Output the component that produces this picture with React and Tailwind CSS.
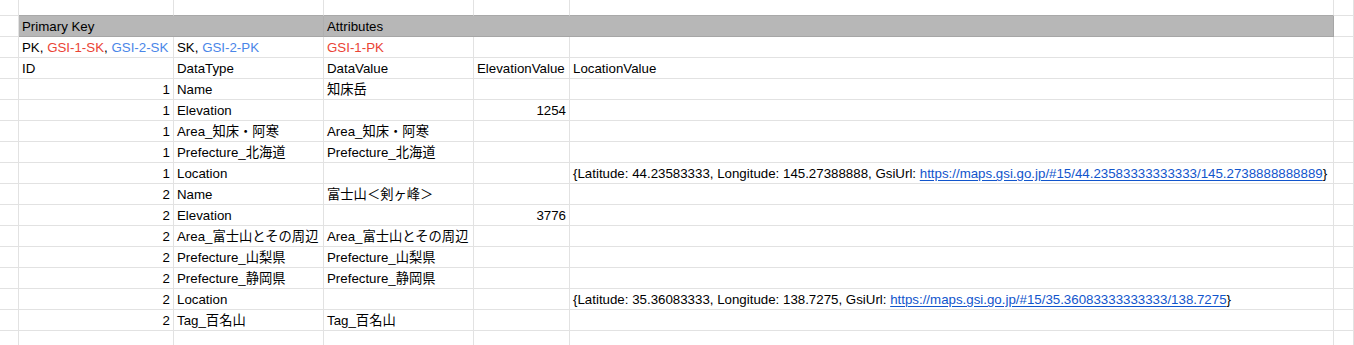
import React from "react";

const COLS = ["w-[19px]", "w-[155px]", "w-[150px]", "w-[150px]", "w-[96px]", "w-[764px]", "flex-1"];

const RED = "text-[#ea4335]";
const BLUE = "text-[#4a86e8]";

function Link({ children }) {
  return <span className="text-[#1155cc] underline underline-offset-[2px]">{children}</span>;
}

const rows = [
  ["1", "Name", "知床岳", "", ""],
  ["1", "Elevation", "", "1254", ""],
  ["1", "Area_知床・阿寒", "Area_知床・阿寒", "", ""],
  ["1", "Prefecture_北海道", "Prefecture_北海道", "", ""],
  [
    "1",
    "Location",
    "",
    "",
    <>
      {"{Latitude: 44.23583333, Longitude: 145.27388888, GsiUrl: "}
      <Link>https://maps.gsi.go.jp/#15/44.23583333333333/145.2738888888889</Link>
      {"}"}
    </>,
  ],
  ["2", "Name", "富士山＜剣ヶ峰＞", "", ""],
  ["2", "Elevation", "", "3776", ""],
  ["2", "Area_富士山とその周辺", "Area_富士山とその周辺", "", ""],
  ["2", "Prefecture_山梨県", "Prefecture_山梨県", "", ""],
  ["2", "Prefecture_静岡県", "Prefecture_静岡県", "", ""],
  [
    "2",
    "Location",
    "",
    "",
    <>
      {"{Latitude: 35.36083333, Longitude: 138.7275, GsiUrl: "}
      <Link>https://maps.gsi.go.jp/#15/35.36083333333333/138.7275</Link>
      {"}"}
    </>,
  ],
  ["2", "Tag_百名山", "Tag_百名山", "", ""],
];

function Cell({ i, children, right, className = "border-r-[#e2e2e2] border-b-[#e2e2e2]" }) {
  return (
    <div
      className={`${COLS[i]} shrink-0 h-full border-r border-b px-[3px] pt-[1px] leading-[19px] whitespace-nowrap overflow-visible ${
        right ? "text-right" : ""
      } ${className}`}
    >
      {children}
    </div>
  );
}

function Row({ children, h = "h-[21px]" }) {
  return <div className={`flex ${h}`}>{children}</div>;
}

export default function App() {
  return (
    <div
      className="w-[1354px] h-[345px] overflow-hidden bg-white text-[13.3px] text-black"
      style={{ fontFamily: '"Liberation Sans", Arial, "Noto Sans CJK JP", sans-serif' }}
    >
      <Row h="h-[16px]">
        {COLS.map((_, i) => (
          <Cell
            key={i}
            i={i}
            className={
              i >= 1 && i <= 5
                ? "border-r-[#e2e2e2] border-b-[#a9a9a9]"
                : "border-r-[#e2e2e2] border-b-[#e2e2e2]"
            }
          />
        ))}
      </Row>
      <Row>
        <Cell i={0} />
        <div className="w-[305px] shrink-0 h-full bg-[#b7b7b7] border-r border-b border-r-[#afafaf] border-b-[#a6a6a6] px-[3px] pt-[1px] leading-[19px] whitespace-nowrap">
          Primary Key
        </div>
        <div className="w-[1010px] shrink-0 h-full bg-[#b7b7b7] border-r border-b border-[#a6a6a6] px-[3px] pt-[1px] leading-[19px] whitespace-nowrap">
          Attributes
        </div>
        <Cell i={6} />
      </Row>
      <Row>
        <Cell i={0} />
        <Cell i={1}>
          PK, <span className={RED}>GSI-1-SK</span>, <span className={BLUE}>GSI-2-SK</span>
        </Cell>
        <Cell i={2}>
          SK, <span className={BLUE}>GSI-2-PK</span>
        </Cell>
        <Cell i={3}>
          <span className={RED}>GSI-1-PK</span>
        </Cell>
        <Cell i={4} />
        <Cell i={5} />
        <Cell i={6} />
      </Row>
      <Row>
        <Cell i={0} />
        <Cell i={1}>ID</Cell>
        <Cell i={2}>DataType</Cell>
        <Cell i={3}>DataValue</Cell>
        <Cell i={4}>ElevationValue</Cell>
        <Cell i={5}>LocationValue</Cell>
        <Cell i={6} />
      </Row>
      {rows.map((r, idx) => (
        <Row key={idx}>
          <Cell i={0} />
          <Cell i={1} right>
            {r[0]}
          </Cell>
          <Cell i={2}>{r[1]}</Cell>
          <Cell i={3}>{r[2]}</Cell>
          <Cell i={4} right>
            {r[3]}
          </Cell>
          <Cell i={5}>{r[4]}</Cell>
          <Cell i={6} />
        </Row>
      ))}
      <Row>
        {COLS.map((_, i) => (
          <Cell key={i} i={i} />
        ))}
      </Row>
    </div>
  );
}
